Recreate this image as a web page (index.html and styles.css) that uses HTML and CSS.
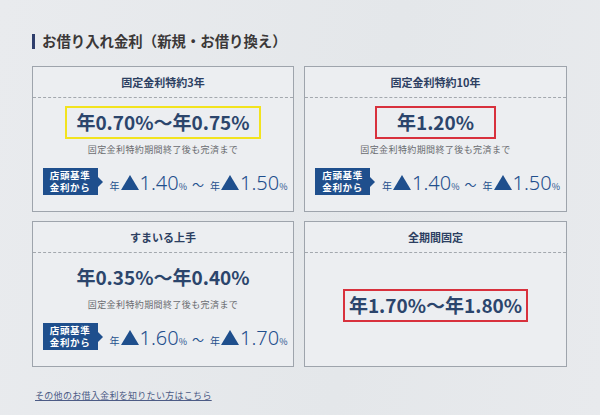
FILE: index.html
```html
<!DOCTYPE html>
<html lang="ja">
<head>
<meta charset="utf-8">
<link rel="stylesheet" href="styles.css">
</head>
<body>
<div class="page">
  <h2 class="title"><span class="bar"></span>お借り入れ金利（新規・お借り換え）</h2>
  <div class="grid">
    <section class="card">
      <div class="card-head">固定金利特約3年</div>
      <div class="card-body">
        <div class="rate rate-yellow">年0.70%〜年0.75%</div>
        <p class="note">固定金利特約期間終了後も完済まで</p>
        <div class="base">
          <div class="badge"><span class="bl">店頭基準</span><span class="bl">金利から</span></div>
          <div class="nums">
            <span class="nen">年</span><span class="tri"></span><span class="num">1.40</span><span class="pct">%</span>
            <span class="tilde">〜</span>
            <span class="nen">年</span><span class="tri"></span><span class="num">1.50</span><span class="pct">%</span>
          </div>
        </div>
      </div>
    </section>
    <section class="card">
      <div class="card-head">固定金利特約10年</div>
      <div class="card-body">
        <div class="rate rate-red">年1.20%</div>
        <p class="note">固定金利特約期間終了後も完済まで</p>
        <div class="base">
          <div class="badge"><span class="bl">店頭基準</span><span class="bl">金利から</span></div>
          <div class="nums">
            <span class="nen">年</span><span class="tri"></span><span class="num">1.40</span><span class="pct">%</span>
            <span class="tilde">〜</span>
            <span class="nen">年</span><span class="tri"></span><span class="num">1.50</span><span class="pct">%</span>
          </div>
        </div>
      </div>
    </section>
    <section class="card">
      <div class="card-head">すまいる上手</div>
      <div class="card-body">
        <div class="rate">年0.35%〜年0.40%</div>
        <p class="note">固定金利特約期間終了後も完済まで</p>
        <div class="base">
          <div class="badge"><span class="bl">店頭基準</span><span class="bl">金利から</span></div>
          <div class="nums">
            <span class="nen">年</span><span class="tri"></span><span class="num">1.60</span><span class="pct">%</span>
            <span class="tilde">〜</span>
            <span class="nen">年</span><span class="tri"></span><span class="num">1.70</span><span class="pct">%</span>
          </div>
        </div>
      </div>
    </section>
    <section class="card">
      <div class="card-head">全期間固定</div>
      <div class="card-body card-body-center">
        <div class="rate rate-red rate-wide">年1.70%〜年1.80%</div>
      </div>
    </section>
  </div>
  <a class="more" href="#">その他のお借入金利を知りたい方はこちら</a>
</div>
</body>
</html>
```

FILE: styles.css
```css
* { box-sizing: border-box; }
html, body { margin: 0; padding: 0; }
body {
  width: 600px;
  height: 415px;
  overflow: hidden;
  background: linear-gradient(100deg, #e9ebee 0%, #e4e7ea 60%, #e8eaed 100%);
  font-family: "Noto Sans CJK JP", "Noto Sans", sans-serif;
  color: #2d4366;
}
.page {
  padding: 31px 0 0 32px;
  width: 600px;
}
.title {
  margin: 0;
  display: flex;
  align-items: center;
  gap: 7px;
  font-size: 14.4px;
  line-height: 20px;
  font-weight: 700;
  color: #3b3838;
}
.bar {
  display: inline-block;
  width: 3px;
  height: 15px;
  background: #2f3e6c;
}
.grid {
  margin-top: 15px;
  display: grid;
  grid-template-columns: 262px 263px;
  grid-template-rows: 146px 146px;
  column-gap: 10px;
  row-gap: 9px;
}
.card {
  border: 1px solid #9ea4ac;
  background: #eceef1;
  display: flex;
  flex-direction: column;
}
.card-head {
  height: 31px;
  line-height: 30px;
  text-align: center;
  font-size: 11px;
  font-weight: 700;
  color: #2c3f62;
  border-bottom: 1px dashed #a3a8ae;
}
.card-body {
  flex: 1;
  display: flex;
  flex-direction: column;
  align-items: center;
  padding-top: 8px;
}
.card-body-center {
  justify-content: center;
  padding: 0 0 8px;
}
.rate {
  height: 33px;
  line-height: 28px;
  padding: 0 12px;
  border: 2px solid transparent;
  font-size: 19px;
  font-weight: 700;
  color: #2b456c;
  white-space: nowrap;
}
.rate-yellow { border-color: #f2e31e; padding: 0 9px; }
.rate-red { border-color: #d8313d; padding: 0 20px; }
.rate-wide { padding: 0 4px; height: 33px; }
.note {
  margin: 5px 0 0;
  font-size: 9px;
  line-height: 12px;
  letter-spacing: 0.4px;
  color: #6a6c70;
}
.base {
  margin-top: 11px;
  margin-left: 4px;
  display: flex;
  align-items: center;
  gap: 12px;
}
.badge {
  position: relative;
  width: 55px;
  height: 27px;
  background: #1f4f8d;
  color: #fff;
  font-size: 9.5px;
  font-weight: 700;
  text-align: center;
  padding-top: 1px;
  letter-spacing: 0.6px;
  display: flex;
  flex-direction: column;
}
.bl {
  display: block;
  height: 12.5px;
  line-height: 12.5px;
}
.badge::after {
  content: "";
  position: absolute;
  right: -5px;
  top: 9px;
  border-left: 5px solid #1f4f8d;
  border-top: 5px solid transparent;
  border-bottom: 5px solid transparent;
}
.nums {
  display: flex;
  align-items: baseline;
  color: #1f4f8d;
  padding-top: 4px;
}
.nen {
  font-size: 10px;
  margin-right: 1px;
}
.tri {
  display: inline-block;
  width: 0;
  height: 0;
  border-left: 9px solid transparent;
  border-right: 9px solid transparent;
  border-bottom: 15px solid #1f4f8d;
  margin-right: 1px;
}
.num {
  font-family: "Noto Sans", sans-serif;
  font-size: 20px;
  font-weight: 300;
  line-height: 24px;
}
.pct {
  font-size: 9px;
}
.tilde {
  font-size: 12px;
  margin: 0 6px 0 5px;
}
.more {
  display: inline-block;
  margin: 22px 0 0 3px;
  font-size: 9px;
  color: #4c5b85;
  text-decoration: underline;
  letter-spacing: 0.3px;
}
```
